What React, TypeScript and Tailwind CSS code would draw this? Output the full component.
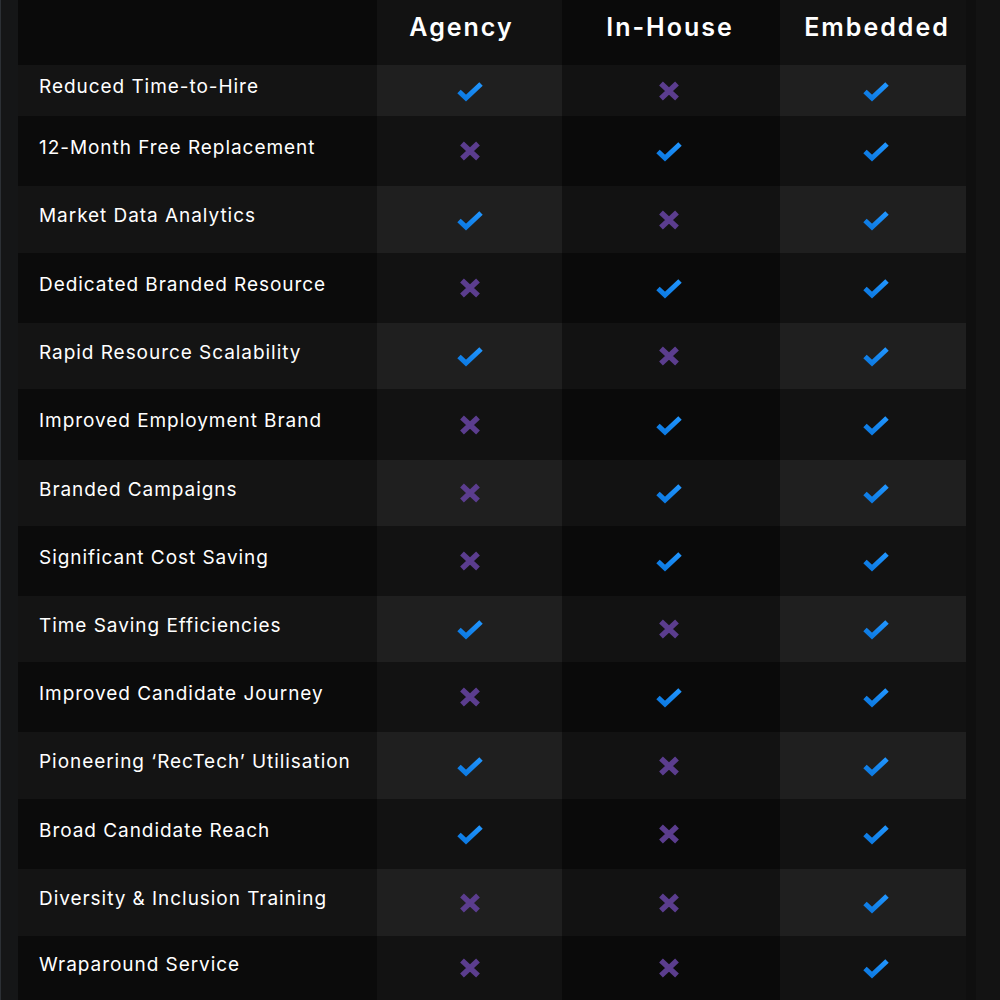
import React from "react"

type Row = { label: string; h: string; marks: [boolean, boolean, boolean] }

const rows: Row[] = [
  { label: "Reduced Time-to-Hire", h: "h-[51px]", marks: [true, false, true] },
  { label: "12-Month Free Replacement", h: "h-[70px]", marks: [false, true, true] },
  { label: "Market Data Analytics", h: "h-[67px]", marks: [true, false, true] },
  { label: "Dedicated Branded Resource", h: "h-[70px]", marks: [false, true, true] },
  { label: "Rapid Resource Scalability", h: "h-[66px]", marks: [true, false, true] },
  { label: "Improved Employment Brand", h: "h-[71px]", marks: [false, true, true] },
  { label: "Branded Campaigns", h: "h-[66px]", marks: [false, true, true] },
  { label: "Significant Cost Saving", h: "h-[70px]", marks: [false, true, true] },
  { label: "Time Saving Efficiencies", h: "h-[66px]", marks: [true, false, true] },
  { label: "Improved Candidate Journey", h: "h-[70px]", marks: [false, true, true] },
  { label: "Pioneering \u2018RecTech\u2019 Utilisation", h: "h-[67px]", marks: [true, false, true] },
  { label: "Broad Candidate Reach", h: "h-[70px]", marks: [true, false, true] },
  { label: "Diversity & Inclusion Training", h: "h-[67px]", marks: [false, false, true] },
  { label: "Wraparound Service", h: "h-[64px]", marks: [false, false, true] },
]

const Check = () => (
  <svg width="28" height="22" viewBox="0 0 28 22" fill="none">
    <defs>
      <linearGradient id="chk" x1="0" y1="1" x2="1" y2="0">
        <stop offset="0" stopColor="#0b78e0" />
        <stop offset="1" stopColor="#2196ff" />
      </linearGradient>
    </defs>
    <path d="M3 11.5 L10 18 L25 4" stroke="url(#chk)" strokeWidth="5" strokeLinejoin="miter" />
  </svg>
)

const Cross = () => (
  <svg width="24" height="22" viewBox="0 0 24 22" fill="none">
    <path d="M4 3.5 L20 18.5 M20 3.5 L4 18.5" stroke="#5b3d8e" strokeWidth="5.5" />
  </svg>
)

const cellBg = (col: number, light: boolean) => {
  if (col === 0) return light ? "bg-[#141414]" : "bg-[#0b0b0b]"
  if (col === 2) return light ? "bg-[#121212]" : "bg-[#0a0a0a]"
  return light ? "bg-[#1f1f1f]" : "bg-[#121212]"
}

const colW = ["w-[359px]", "w-[185px]", "w-[218px]", "w-[186px]"]
// small nudges so icons and headings sit where the design has them
const iconPad = ["pr-0", "pr-[4px]", "pl-[6px]"]
const headPad = ["pr-[16px]", "pr-[2px]", "pl-[8px]"]

export default function App() {
  return (
    <div className="flex h-[1000px] w-[1000px] overflow-hidden bg-[#121212] font-['Inter',sans-serif] text-white">
      <div className="w-[18px] border-l border-[#2c3035] bg-[#151617]" />
      <div className="flex w-[948px] flex-col">
        <div className="flex h-[65px]">
          <div className={`${colW[0]} bg-[#0a0a0a]`} />
          {["Agency", "In-House", "Embedded"].map((t, i) => (
            <div
              key={t}
              className={`${colW[i + 1]} ${headPad[i]} ${i === 1 ? "bg-[#0a0a0a]" : "bg-[#121212]"} flex items-center justify-center pb-[9px] text-[25px] font-semibold tracking-[0.08em]`}
            >
              {t}
            </div>
          ))}
        </div>
        {rows.map((r, idx) => {
          const light = idx % 2 === 0
          return (
            <div key={r.label} className={`flex ${r.h}`}>
              <div className={`${colW[0]} ${cellBg(0, light)} flex items-center pb-[6px] pl-[21px] text-[19px] tracking-[0.05em]`}>
                {r.label}
              </div>
              {r.marks.map((m, i) => (
                <div key={i} className={`${colW[i + 1]} ${cellBg(i + 1, light)} ${iconPad[i]} flex items-center justify-center`}>
                  {m ? <Check /> : <Cross />}
                </div>
              ))}
            </div>
          )
        })}
      </div>
      <div className="flex flex-1">
        <div className="w-[10px] bg-[#0f0f0f]" />
        <div className="flex-1 bg-[#131313]" />
      </div>
    </div>
  )
}
